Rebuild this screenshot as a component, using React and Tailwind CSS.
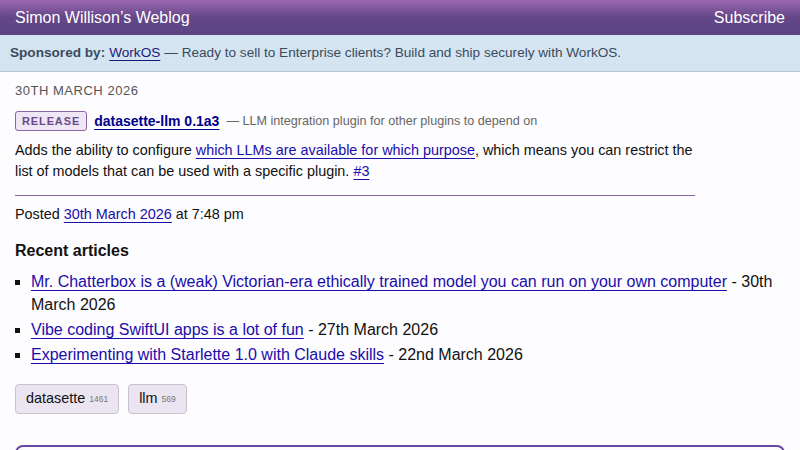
export default function App() {
  const articles = [
    {
      title:
        "Mr. Chatterbox is a (weak) Victorian-era ethically trained model you can run on your own computer",
      date: "30th March 2026",
    },
    { title: "Vibe coding SwiftUI apps is a lot of fun", date: "27th March 2026" },
    { title: "Experimenting with Starlette 1.0 with Claude skills", date: "22nd March 2026" },
  ];
  const link = "text-[#1a0dab] underline decoration-1 underline-offset-[3px]";

  return (
    <div className="min-h-[450px] bg-[#fdfcfe] font-['Liberation_Sans',Arial,sans-serif] text-[#111]">
      {/* header */}
      <header className="flex h-[35px] items-center justify-between bg-gradient-to-b from-[#9c68b1] via-[#644688] to-[#5c4584] px-[15px] text-white">
        <span className="text-[16px]">Simon Willison’s Weblog</span>
        <span className="text-[16px]">Subscribe</span>
      </header>

      <div className="flex h-[37px] items-center border-b border-[#b3c6d9] bg-[#d5e4f1] px-[10px] text-[13.6px] text-[#3b4b5c]">
        <b>Sponsored by:</b>
        <span className="ml-1 underline decoration-1 underline-offset-[3px] text-[#1a1a7a]">WorkOS</span>
        <span className="ml-1">— Ready to sell to Enterprise clients? Build and ship securely with WorkOS.</span>
      </div>

      <main className="px-[15px]">
        <div className="mt-[9px] text-[13px] uppercase tracking-[0.04em] text-[#555]">30th March 2026</div>

        <div className="mt-[10px] flex items-center">
          <span className="rounded-[3px] border border-[#8d64a8] bg-[#efe6f6] px-[6px] py-[1px] text-[11px] font-bold tracking-[0.08em] text-[#6b4a8a]">
            RELEASE
          </span>
          <span className="ml-[7px] text-[14px] font-bold text-[#00008b] underline decoration-1 underline-offset-[3px]">
            datasette-llm 0.1a3
          </span>
          <span className="ml-[7px] text-[12.6px] text-[#666]">— LLM integration plugin for other plugins to depend on</span>
        </div>

        <p className="mt-[8px] w-[690px] text-[14.4px] leading-[21px]">
          Adds the ability to configure <span className={link}>which LLMs are available for which purpose</span>, which
          means you can restrict the list of models that can be used with a specific plugin.{" "}
          <span className={link}>#3</span>
        </p>

        <div className="mt-[13px] h-px w-[680px] bg-[#8a63a3]" />

        <p className="mt-[8px] text-[14.4px]">
          Posted <span className={link}>30th March 2026</span> at 7:48 pm
        </p>

        <h3 className="mt-[14px] text-[16px] font-bold">Recent articles</h3>

        <ul className="mt-[7px] list-[square] pl-[16px] text-[16px] leading-[23px]">
          {articles.map((a) => (
            <li key={a.title} className="mb-[2px]">
              <span className={link}>{a.title}</span> - {a.date}
            </li>
          ))}
        </ul>

        <div className="mt-[18px] flex gap-[9px]">
          {[
            ["datasette", "1461"],
            ["llm", "569"],
          ].map(([t, n]) => (
            <span
              key={t}
              className="flex h-[30px] items-center rounded-[4px] border border-[#c9c1d2] bg-[#ebe5f1] px-[10px] text-[14.4px]"
            >
              {t}
              <span className="ml-[4px] text-[8.5px] text-[#777]">{n}</span>
            </span>
          ))}
        </div>

        <div className="mt-[31px] h-[40px] rounded-[8px] border-2 border-[#6a47a0]" />
      </main>
    </div>
  );
}
